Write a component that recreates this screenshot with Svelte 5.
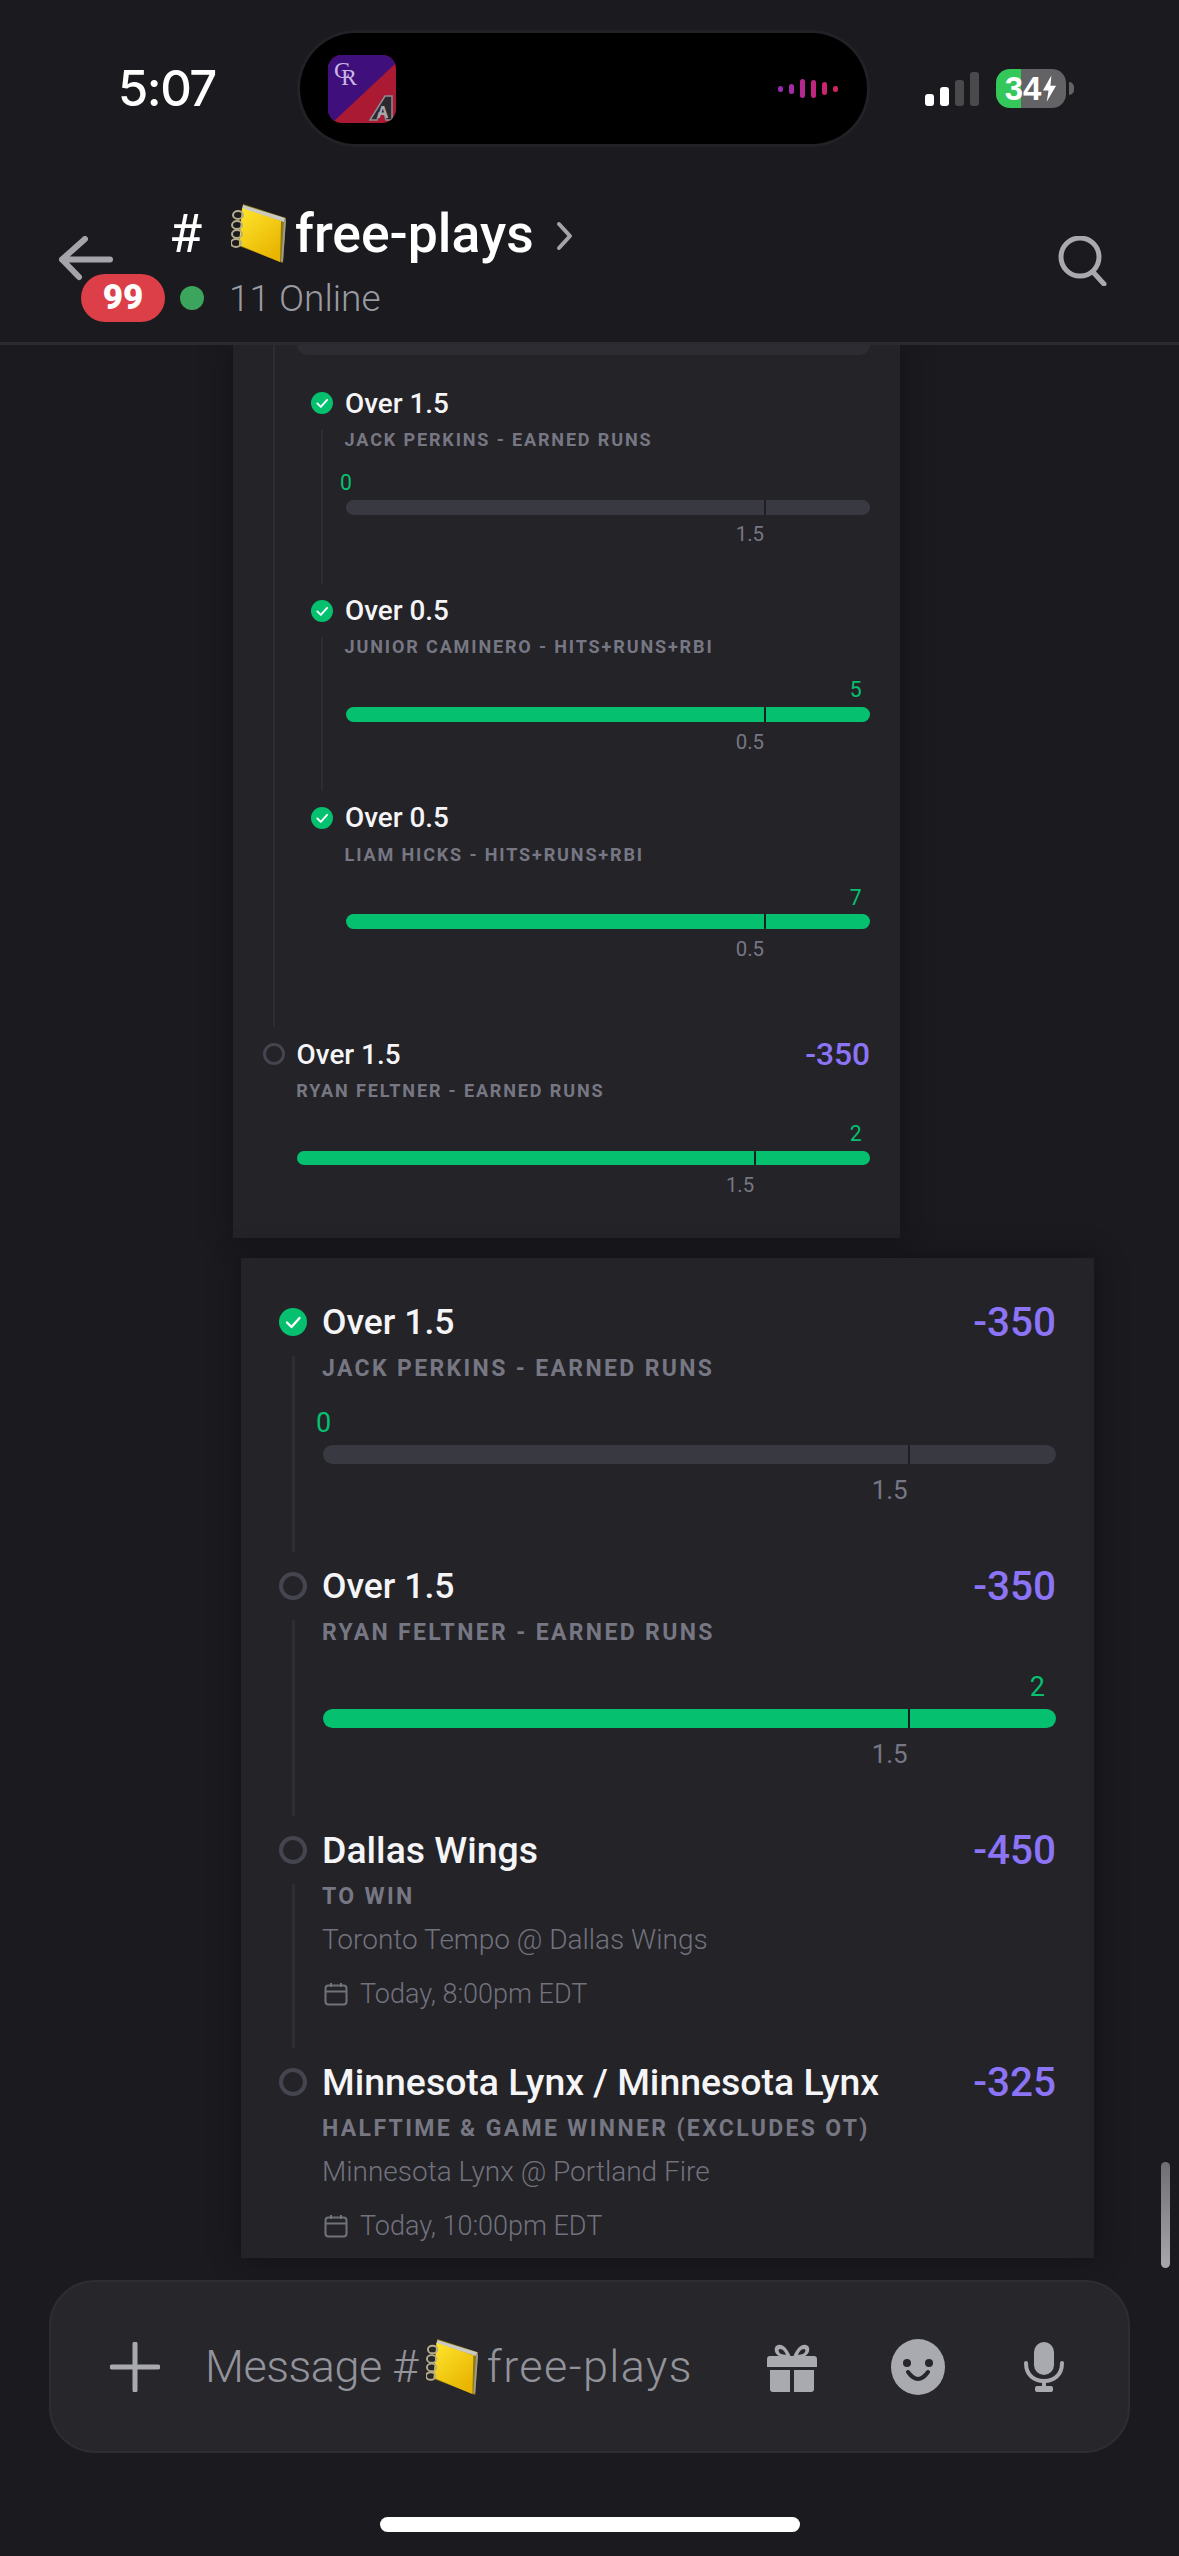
<script>
  // legs shown in the older, smaller parlay card
  const nested = [
    { title: 'Over 1.5', label: 'Jack Perkins - Earned Runs', value: 0, line: '1.5', won: false, done: true, connect: true },
    { title: 'Over 0.5', label: 'Junior Caminero - Hits+Runs+RBI', value: 5, line: '0.5', won: true, done: true, connect: true },
    { title: 'Over 0.5', label: 'Liam Hicks - Hits+Runs+RBI', value: 7, line: '0.5', won: true, done: true, connect: false }
  ];
  const lastOfOld = { title: 'Over 1.5', odds: '-350', label: 'Ryan Feltner - Earned Runs', value: 2, line: '1.5', won: true, done: false, connect: false };

  const legs = [
    { title: 'Over 1.5', odds: '-350', label: 'Jack Perkins - Earned Runs', value: 0, line: '1.5', won: false, done: true, connect: true },
    { title: 'Over 1.5', odds: '-350', label: 'Ryan Feltner - Earned Runs', value: 2, line: '1.5', won: true, done: false, connect: true },
    { title: 'Dallas Wings', odds: '-450', label: 'To Win', game: 'Toronto Tempo @ Dallas Wings', time: 'Today, 8:00pm EDT', done: false, connect: true },
    { title: 'Minnesota Lynx / Minnesota Lynx', odds: '-325', label: 'Halftime & Game Winner (Excludes OT)', game: 'Minnesota Lynx @ Portland Fire', time: 'Today, 10:00pm EDT', done: false, connect: false }
  ];
</script>

{#snippet notebook()}
  <svg class="notebook" viewBox="0 0 56 60">
    <defs>
      <linearGradient id="cover" x1="0" y1="0" x2="0.7" y2="1">
        <stop offset="0" stop-color="#ffe62e" />
        <stop offset="1" stop-color="#e8b400" />
      </linearGradient>
    </defs>
    <path d="M12 1 L55 15 L52 60 L8 43 Z" fill="#8f7a12" />
    <path d="M12 2 L54 15 L53 19 L11 6 Z" fill="#c9c9c6" />
    <path d="M53 17 L55 17 L52 58 L50 59 Z" fill="#9b9b94" />
    <path d="M11 5 L50 18 L49 59 L8 42 Z" fill="url(#cover)" />
    <g fill="none" stroke="#b5ad8c" stroke-width="2">
      <ellipse cx="7" cy="12" rx="5" ry="4" />
      <ellipse cx="6" cy="22" rx="5" ry="4" />
      <ellipse cx="6" cy="31" rx="5" ry="4" />
      <ellipse cx="5" cy="40" rx="5" ry="4" />
    </g>
  </svg>
{/snippet}

{#snippet calendar()}
  <svg class="cal" viewBox="0 0 24 24" fill="none" stroke="currentColor" stroke-width="2">
    <rect x="1.5" y="3.5" width="21" height="19" rx="3" />
    <path d="M1.5 9.5 H22.5 M7 1 V5 M17 1 V5" />
  </svg>
{/snippet}

{#snippet leg(l)}
  <div class="leg">
    <div class="head">
      {#if l.done}
        <svg class="mark" viewBox="0 0 28 28">
          <circle cx="14" cy="14" r="14" fill="#05c16f" />
          <path d="M8 14.5 L12.5 19 L20.5 10" fill="none" stroke="#fff" stroke-width="2.4" stroke-linecap="round" stroke-linejoin="round" />
        </svg>
      {:else}
        <span class="mark open"></span>
      {/if}
      <span class="title" class:team={l.game}>{l.title}</span>
      {#if l.odds}<span class="odds">{l.odds}</span>{/if}
    </div>
    <div class="body" class:connect={l.connect}>
      <div class="label">{l.label}</div>
      {#if l.game}
        <div class="game">{l.game}</div>
        <div class="when">{@render calendar()}<span>{l.time}</span></div>
      {:else}
        <div class="value" class:start={!l.won}>{l.value}</div>
        <div class="bar" class:won={l.won}><i></i></div>
        <div class="limit">{l.line}</div>
      {/if}
    </div>
  </div>
{/snippet}

<div class="page">
  <header>
    <div class="status">
      <div class="time">5:07</div>
      <div class="island">
        <svg class="live" viewBox="0 0 68 68">
          <defs>
            <clipPath id="tile"><rect width="68" height="68" rx="14" /></clipPath>
          </defs>
          <g clip-path="url(#tile)">
            <rect width="68" height="68" fill="#ab1a33" />
            <path d="M0 0 H68 V8 L4 68 H0 Z" fill="#3f0f7c" />
            <text x="6" y="23" class="cr">C<tspan dx="-9" dy="7">R</tspan></text>
            <path d="M42 65 L57 41 H64 V65 H58 L56 58 H51 L49 65 Z" fill="#2c2a30" stroke="#8d8d92" stroke-width="1.5" />
            <text x="49" y="63" class="az">A</text>
          </g>
        </svg>
        <div class="wave">
          <i></i><i></i><i></i><i></i><i></i><i></i>
        </div>
      </div>
      <div class="indicators">
        <div class="signal"><i></i><i></i><i></i><i></i></div>
        <div class="battery">
          <span>34</span>
          <svg viewBox="0 0 16 28"><path d="M10 0 L1 16 H7 L5 28 L15 11 H9 Z" fill="#fff" /></svg>
        </div>
        <div class="nub"></div>
      </div>
    </div>

    <div class="channel">
      <div class="back">
        <svg viewBox="0 0 56 46" fill="none" stroke="#a4a4aa" stroke-width="6" stroke-linecap="round" stroke-linejoin="round">
          <path d="M53 23.5 H5 M28 3 L5 23.5 L22 41" />
        </svg>
        <span class="badge">99</span>
      </div>
      <div class="info">
        <div class="name">
          <span class="hash">#</span>
          {@render notebook()}
          <span>free-plays</span>
          <svg class="chev" viewBox="0 0 20 30" fill="none" stroke="#a4a4aa" stroke-width="4" stroke-linecap="round" stroke-linejoin="round">
            <path d="M4 3 L15 15 L4 27" />
          </svg>
        </div>
        <div class="online"><span class="dot"></span>11 Online</div>
      </div>
      <svg class="search" viewBox="0 0 50 50" fill="none" stroke="#a9a9ae" stroke-width="5" stroke-linecap="round">
        <circle cx="23" cy="21" r="19" />
        <path d="M36 36 L47 48" />
      </svg>
    </div>
  </header>

  <main>
    <section class="card old">
      <div class="leg">
        <div class="body connect lead">
          <div class="tail"></div>
          <div class="nested">
            {#each nested as l}
              {@render leg(l)}
            {/each}
          </div>
        </div>
      </div>
      {@render leg(lastOfOld)}
    </section>

    <section class="card new">
      {#each legs as l}
        {@render leg(l)}
      {/each}
    </section>

    <div class="thumb"></div>
  </main>

  <div class="composer">
    <svg class="plus" viewBox="0 0 50 50" stroke="#a9a9b0" stroke-width="5" stroke-linecap="round">
      <path d="M25 2 V48 M2 25 H48" />
    </svg>
    <div class="placeholder">
      <span>Message #</span>
      {@render notebook()}
      <span class="room">free-plays</span>
    </div>
    <svg class="gift" viewBox="0 0 50 50" fill="#a9a9b0">
      <path d="M24 15 C20 6 16 2 11 3 C6 4 7 12 12 14 L24 16 Z M14 12 C11 10 11 7 13 7 C16 7 18 10 19 13 Z" fill-rule="evenodd" />
      <path d="M26 15 C30 6 34 2 39 3 C44 4 43 12 38 14 L26 16 Z M36 12 C39 10 39 7 37 7 C34 7 32 10 31 13 Z" fill-rule="evenodd" />
      <path d="M3 14 H47 Q50 14 50 17 V25 H0 V17 Q0 14 3 14 Z" />
      <path d="M3 28 H23 V50 H6 Q3 50 3 47 Z M27 28 H47 V47 Q47 50 44 50 H27 Z" />
    </svg>
    <svg class="smile" viewBox="0 0 54 56">
      <ellipse cx="27" cy="28" rx="27" ry="28" fill="#a9a9b0" />
      <circle cx="16" cy="24" r="4" fill="#26262b" />
      <circle cx="38" cy="24" r="4" fill="#26262b" />
      <path d="M17 33 Q27 47 37 33" fill="none" stroke="#26262b" stroke-width="4" stroke-linecap="round" />
    </svg>
    <svg class="mic" viewBox="0 0 40 50" fill="none" stroke="#a9a9b0" stroke-width="4" stroke-linecap="round">
      <rect x="10" y="0" width="20" height="33" rx="10" fill="#a9a9b0" stroke="none" />
      <path d="M2 21 C2 33 10 39 20 39 C30 39 38 33 38 21" />
      <path d="M20 39 V46" />
      <rect x="11" y="44" width="18" height="6" rx="2" fill="#a9a9b0" stroke="none" />
    </svg>
  </div>

  <div class="home"></div>
</div>

<style>
  :global(body) {
    margin: 0;
    background: #1a1a1f;
  }

  .page {
    width: 1179px;
    height: 2556px;
    display: flex;
    flex-direction: column;
    overflow: hidden;
    background: #1a1a1f;
    color: #fff;
    font-family: Roboto, "Noto Sans", sans-serif;
  }

  header {
    height: 345px;
    box-sizing: border-box;
    flex: none;
    border-bottom: 3px solid #2a2a30;
  }

  /* status bar */
  .status {
    display: grid;
    grid-template-columns: 300px 567px 1fr;
    align-items: center;
    padding-top: 33px;
  }

  .time {
    padding-left: 118px;
    font-size: 49px;
    font-weight: 500;
    font-family: Inter, Roboto, sans-serif;
    letter-spacing: -1.5px;
  }

  .island {
    height: 111px;
    display: flex;
    align-items: center;
    justify-content: space-between;
    padding: 0 29px 0 28px;
    box-sizing: border-box;
    background: #000;
    border-radius: 56px;
    box-shadow: 0 0 0 3px #212126;
  }

  .live {
    width: 68px;
    height: 68px;
  }

  .cr {
    font-family: "Liberation Serif", serif;
    font-size: 24px;
    fill: #c9b6e6;
  }

  .az {
    font-family: "Liberation Sans", sans-serif;
    font-size: 16px;
    font-weight: 700;
    fill: #a9a9ae;
  }

  .wave {
    display: flex;
    align-items: center;
    gap: 6px;
  }

  .wave i {
    width: 5px;
    border-radius: 3px;
  }

  .wave i:nth-child(1) { height: 6px; background: #9a2bb0; }
  .wave i:nth-child(2) { height: 10px; background: #a52aa5; }
  .wave i:nth-child(3) { height: 19px; background: #b5288f; }
  .wave i:nth-child(4) { height: 18px; background: #c0267f; }
  .wave i:nth-child(5) { height: 13px; background: #ca2570; }
  .wave i:nth-child(6) { height: 6px; background: #d4245f; }

  .indicators {
    display: flex;
    align-items: center;
    padding-left: 58px;
  }

  .signal {
    display: flex;
    align-items: flex-end;
    gap: 6px;
    height: 34px;
    margin: 1px 17px 0 0;
  }

  .signal i {
    width: 9px;
    height: 34px;
    border-radius: 3px;
    background: #4a4a4d;
  }

  .signal i:nth-child(1) { height: 12px; background: #fff; }
  .signal i:nth-child(2) { height: 19px; background: #fff; }
  .signal i:nth-child(3) { height: 26px; }

  .battery {
    width: 70px;
    height: 39px;
    display: flex;
    align-items: center;
    justify-content: center;
    gap: 1px;
    border-radius: 14px;
    background: linear-gradient(90deg, #34c759 0 25px, #636366 25px);
    font-family: "Liberation Sans", sans-serif;
    font-size: 33px;
    font-weight: 700;
  }

  .battery svg {
    width: 15px;
    height: 27px;
  }

  .nub {
    width: 5px;
    height: 13px;
    margin-left: 3px;
    border-radius: 0 6px 6px 0;
    background: #636366;
  }

  /* channel bar */
  .channel {
    display: flex;
    align-items: flex-start;
    padding-top: 59px;
  }

  .back {
    position: relative;
    flex: none;
    width: 115px;
    height: 100px;
    margin-left: 57px;
  }

  .back svg {
    position: absolute;
    left: 0;
    top: 33px;
    width: 56px;
    height: 46px;
  }

  .badge {
    position: absolute;
    left: 24px;
    top: 71px;
    width: 84px;
    height: 48px;
    border-radius: 24px;
    background: #dd3f48;
    font-size: 35px;
    font-weight: 900;
    line-height: 48px;
    text-align: center;
  }

  .info {
    flex: 1;
  }

  .name {
    display: flex;
    align-items: center;
    gap: 8px;
    height: 60px;
    font-size: 53.5px;
    font-weight: 500;
  }

  .hash {
    width: 54px;
    margin-left: -3px;
    font-weight: 400;
    font-size: 54px;
  }

  .chev {
    width: 20px;
    height: 30px;
    margin: 6px 0 0 13px;
  }

  .notebook {
    width: 56px;
    height: 60px;
    flex: none;
  }

  .online {
    display: flex;
    align-items: center;
    height: 48px;
    margin-top: 11px;
    color: #9a9aa2;
    font-size: 37px;
    font-weight: 300;
  }

  .dot {
    width: 24px;
    height: 24px;
    margin: 0 25px 0 8px;
    border-radius: 50%;
    background: #3ba55d;
  }

  .search {
    flex: none;
    width: 50px;
    height: 50px;
    margin: 33px 72px 0 0;
  }

  /* message area */
  main {
    position: relative;
    flex: 1;
    min-height: 0;
    overflow: hidden;
  }

  .card {
    box-sizing: border-box;
    padding: 0 calc(var(--s) * 38px);
    background: #232328;
    box-shadow: 0 0 24px #131316;
  }

  .old {
    --s: 0.785;
    width: 667px;
    margin: 0 0 20px 233px;
    padding-bottom: 3.5px;
  }

  .new {
    --s: 1;
    width: 853px;
    height: 1000px;
    margin-left: 241px;
    padding-top: 47px;
    overflow: hidden;
  }

  .tail {
    height: 10px;
    margin-left: 1px;
    border-radius: 0 0 16px 16px;
    background: #2c2c32;
  }

  .nested {
    margin: 35px 0 0 15px;
    padding-bottom: 29px;
  }

  .leg {
    margin-bottom: calc(var(--s) * 17px);
  }

  .leg:last-child {
    margin-bottom: 0;
  }

  .head {
    display: flex;
    align-items: center;
    height: calc(var(--s) * 34px);
  }

  .mark {
    flex: none;
    box-sizing: border-box;
    width: calc(var(--s) * 28px);
    height: calc(var(--s) * 28px);
    margin-right: calc(var(--s) * 15px);
  }

  .open {
    border: calc(var(--s) * 4px) solid #45454f;
    border-radius: 50%;
  }

  .title {
    flex: 1;
    font-size: calc(var(--s) * 35.5px);
    font-weight: 500;
    color: #f5f5f7;
    white-space: nowrap;
  }

  .team {
    font-size: calc(var(--s) * 37.4px);
  }

  .odds {
    color: #8b74f5;
    font-size: calc(var(--s) * 40.5px);
    font-weight: 500;
  }

  .body {
    box-sizing: border-box;
    margin: calc(var(--s) * 17px) 0 0 calc(var(--s) * 12.5px);
    border-left: calc(var(--s) * 3px) solid transparent;
    padding-left: calc(var(--s) * 27.5px);
    min-height: calc(var(--s) * 164px);
  }

  .body:has(.bar) {
    min-height: calc(var(--s) * 196px);
  }

  .body.lead {
    margin-top: 0;
  }

  .connect {
    border-left-color: #2d2d33;
  }

  .label {
    height: calc(var(--s) * 26px);
    color: #777784;
    font-size: calc(var(--s) * 23px);
    font-weight: 700;
    line-height: calc(var(--s) * 26px);
    letter-spacing: calc(var(--s) * 2.35px);
    text-transform: uppercase;
    white-space: nowrap;
  }

  .value {
    height: calc(var(--s) * 32px);
    margin-top: calc(var(--s) * 25px);
    padding-right: calc(var(--s) * 11px);
    color: #05c16f;
    font-size: calc(var(--s) * 27px);
    line-height: calc(var(--s) * 32px);
    text-align: right;
  }

  .value.start {
    margin-left: calc(var(--s) * -6px);
    text-align: left;
  }

  .bar {
    position: relative;
    height: calc(var(--s) * 19px);
    margin: calc(var(--s) * 6px) 0 0 1px;
    border-radius: calc(var(--s) * 10px);
    background: #393942;
  }

  .bar.won {
    background: #05c16f;
  }

  .bar i {
    position: absolute;
    left: 79.8%;
    top: 0;
    bottom: 0;
    width: 2px;
    background: #1f1f23;
  }

  .limit {
    width: 79.8%;
    height: calc(var(--s) * 30px);
    margin-top: calc(var(--s) * 11px);
    color: #777784;
    font-size: calc(var(--s) * 26px);
    line-height: calc(var(--s) * 30px);
    text-align: right;
  }

  .game {
    height: 36px;
    margin-top: 12px;
    color: #72727d;
    font-size: 28px;
    font-weight: 300;
    line-height: 36px;
    white-space: nowrap;
  }

  .when {
    display: flex;
    align-items: center;
    gap: 12px;
    height: 36px;
    margin-top: 18px;
    color: #72727d;
    font-size: 27px;
    font-weight: 300;
  }

  .cal {
    width: 24px;
    height: 24px;
    margin-left: 2px;
  }

  .thumb {
    position: absolute;
    left: 1161px;
    top: 1817px;
    width: 9px;
    height: 106px;
    border-radius: 5px;
    background: linear-gradient(#6f6f73, #a8a8ac);
  }

  /* composer */
  .composer {
    flex: none;
    box-sizing: border-box;
    display: flex;
    align-items: center;
    height: 173px;
    margin: 0 49px;
    padding: 0 64px 0 59px;
    border: 2px solid #2d2d32;
    border-radius: 46px;
    background: #26262b;
  }

  .plus {
    width: 50px;
    height: 50px;
    margin-right: 45px;
  }

  .placeholder {
    flex: 1;
    display: flex;
    align-items: center;
    gap: 8px;
    color: #93939b;
    font-size: 45px;
    font-weight: 300;
    white-space: nowrap;
    letter-spacing: -0.5px;
  }

  .placeholder .room {
    letter-spacing: 1.4px;
  }

  .placeholder .notebook {
    width: 53px;
    height: 57px;
  }

  .gift {
    width: 50px;
    height: 50px;
  }

  .smile {
    width: 54px;
    height: 56px;
    margin-left: 74px;
  }

  .mic {
    width: 40px;
    height: 50px;
    margin-left: 79px;
  }

  .home {
    flex: none;
    width: 420px;
    height: 15px;
    margin: 64px auto 24px;
    border-radius: 8px;
    background: #fff;
  }
</style>
